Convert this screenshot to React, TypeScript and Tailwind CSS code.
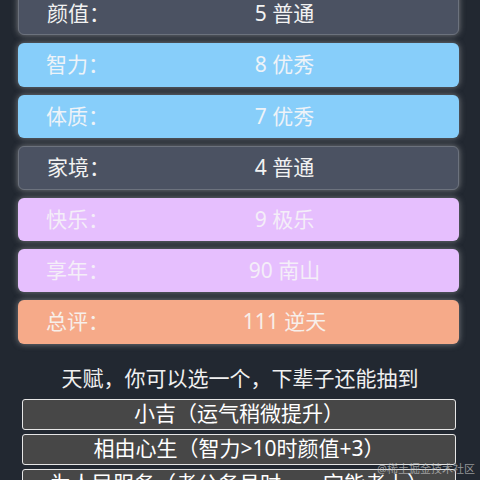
const stats = [
  { label: "颜值：", value: "5 普通", tone: "gray" },
  { label: "智力：", value: "8 优秀", tone: "blue" },
  { label: "体质：", value: "7 优秀", tone: "blue" },
  { label: "家境：", value: "4 普通", tone: "gray" },
  { label: "快乐：", value: "9 极乐", tone: "purple" },
  { label: "享年：", value: "90 南山", tone: "purple" },
  { label: "总评：", value: "111 逆天", tone: "orange" },
];

const toneClass: Record<string, string> = {
  gray: "bg-[#4b5262] border border-[#6c727d] text-[#f2f2f2]",
  blue: "bg-[#87cefa] text-[#eef3f8]",
  purple: "bg-[#e6bffe] text-[#f4eef8]",
  orange: "bg-[#f6aa89] text-[#f7efea]",
};

const talents = [
  "小吉（运气稍微提升）",
  "相由心生（智力>10时颜值+3）",
  "为人民服务（考公务员时，一定能考上）",
];

export default function App() {
  return (
    <div
      className="relative h-[480px] w-[480px] overflow-hidden bg-[#222831]"
      style={{ fontFamily: '"Noto Sans", "Noto Sans CJK SC", sans-serif' }}
    >
      {/* summary cards */}
      <div className="mt-[-8px] flex flex-col gap-2 pl-[18px] pr-[21px]">
        {stats.map((s) => (
          <div
            key={s.label}
            className={`flex h-[43.4px] items-center rounded-md pl-7 pr-7 text-[21px] shadow-[0_0_6px_rgba(200,200,200,0.55)] ${toneClass[s.tone]}`}
          >
            <span className="w-[92px]">{s.label}</span>
            <span className="flex-1 text-center">{s.value}</span>
          </div>
        ))}
      </div>

      <p className="mt-[20px] text-center text-[21px] leading-[28px] text-[#f0f0f0]">
        天赋，你可以选一个，下辈子还能抽到
      </p>

      {/* talent choices */}
      <div className="mt-[7px] flex flex-col gap-[4px] pl-[22px] pr-[24px]">
        {talents.map((t) => (
          <div
            key={t}
            className="flex h-[31px] items-center justify-center whitespace-nowrap rounded-[3px] border border-[#e6e6e6] bg-[#474747] text-[21px] text-white"
          >
            {t}
          </div>
        ))}
      </div>

      <span className="absolute bottom-[3px] right-[5px] text-[11px] text-[#c8c8c8]/70">
        @稀土掘金技术社区
      </span>
    </div>
  );
}
